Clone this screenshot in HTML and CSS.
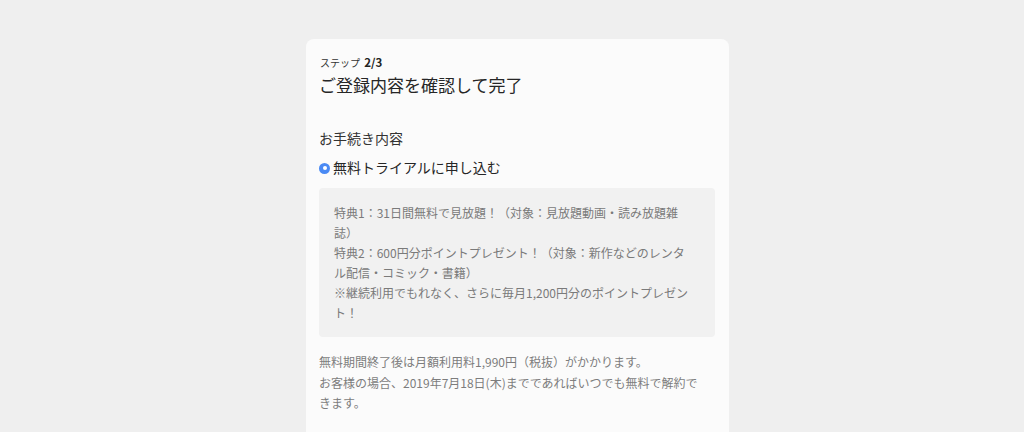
FILE: index.html
```html
<!DOCTYPE html>
<html lang="ja">
<head>
<meta charset="utf-8">
<link rel="stylesheet" href="styles.css">
</head>
<body>
<main class="card">
  <div class="step"><span class="step-label">ステップ</span> <b class="step-num">2/3</b></div>
  <h1 class="title">ご登録内容を確認して完了</h1>
  <h2 class="section">お手続き内容</h2>
  <div class="option">
    <span class="radio"></span>
    <span class="option-text">無料トライアルに申し込む</span>
  </div>
  <div class="benefits">
    <p>特典1：31日間無料で見放題！（対象：見放題動画・読み放題雑誌）</p>
    <p>特典2：600円分ポイントプレゼント！（対象：新作などのレンタル配信・コミック・書籍）</p>
    <p>※継続利用でもれなく、さらに毎月1,200円分のポイントプレゼント！</p>
  </div>
  <div class="note">
    <p>無料期間終了後は月額利用料1,990円（税抜）がかかります。</p>
    <p>お客様の場合、2019年7月18日(木)までであればいつでも無料で解約できます。</p>
  </div>
</main>
</body>
</html>
```

FILE: styles.css
```css
* { box-sizing: border-box; }
html, body { margin: 0; padding: 0; }
body {
  background: #efefef;
  font-family: "Noto Sans CJK JP", "Noto Sans", sans-serif;
  color: #222;
  height: 432px;
  overflow: hidden;
}
.card {
  margin: 39px 0 0 306px;
  width: 423px;
  height: 400px;
  background: #fbfbfb;
  border-radius: 8px 8px 0 0;
  padding: 16px 14px 0 13px;
}
.step {
  font-size: 10px;
  line-height: 14px;
  color: #333;
  padding-left: 1px;
}
.step-label { margin-right: 2px; }
.step-num { font-size: 11.5px; font-weight: 700; color: #222; }
.title {
  margin: 3px 0 0;
  font-size: 17px;
  font-weight: 400;
  line-height: 24px;
  color: #262626;
}
.section {
  margin: 31px 0 0;
  font-size: 14px;
  font-weight: 400;
  line-height: 20px;
  color: #333;
}
.option {
  margin-top: 9px;
  display: flex;
  align-items: center;
  height: 20px;
}
.radio {
  width: 11px;
  height: 11px;
  border-radius: 50%;
  background: #4a8af4;
  position: relative;
  margin-top: 2px;
  margin-right: 3px;
  flex: none;
}
.radio::after {
  content: "";
  position: absolute;
  left: 3.5px;
  top: 3.5px;
  width: 4px;
  height: 4px;
  border-radius: 50%;
  background: #fff;
}
.option-text {
  font-size: 14px;
  line-height: 20px;
  color: #262626;
}
.benefits {
  margin-top: 11px;
  background: #f1f1f1;
  border-radius: 4px;
  padding: 15px 22px 14px 15px;
  font-size: 12px;
  line-height: 20px;
  color: #7a7a7a;
}
.benefits p, .note p { margin: 0; }
.note {
  margin-top: 15px;
  padding-right: 9px;
  font-size: 12px;
  line-height: 20.5px;
  color: #7d7d7d;
}
```
